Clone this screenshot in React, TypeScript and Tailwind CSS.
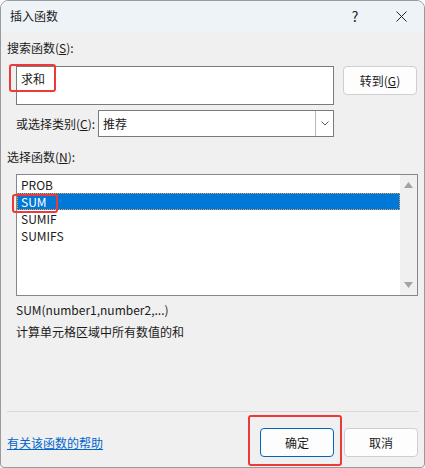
const font = { fontFamily: '"Segoe UI", "Noto Sans CJK SC", "Noto Sans", sans-serif' };

const Mark = ({ className }: { className: string }) => (
  <div className={`absolute border-2 border-[#ec3a3a] rounded-[3px] pointer-events-none ${className}`} />
);

const App = () => {
  const items = ["PROB", "SUM", "SUMIF", "SUMIFS"];
  return (
    <div
      className="w-[425px] h-[468px] bg-[#f0f0f0] border border-[#9a9a9a] rounded-t-[8px] rounded-b-[4px] overflow-hidden text-[12px] leading-[16px] text-[#1a1a1a] flex flex-col"
      style={font}
    >
      {/* title bar */}
      <div className="h-[30px] shrink-0 bg-[#eef3f8] flex items-center">
        <span className="pl-[9px] flex-1">插入函数</span>
        <div className="w-[46px] h-full flex items-center justify-center text-[14px]">?</div>
        <div className="w-[46px] h-full flex items-center justify-center">
          <svg width="11" height="11" viewBox="0 0 11 11">
            <path d="M0.5 0.5L10.5 10.5M10.5 0.5L0.5 10.5" stroke="#222" strokeWidth="1" />
          </svg>
        </div>
      </div>

      <div className="flex flex-col pl-[6px] pr-[6px]">
        <div className="mt-[9px]">
          搜索函数(<span className="underline">S</span>):
        </div>

        <div className="mt-[10px] flex items-start">
          <div className="relative ml-[9px] w-[318px] h-[39px] bg-white border border-[#7a7a7a]">
            <span className="absolute left-[4px] top-[4px]">求和</span>
            <Mark className="left-[-8px] top-[-3px] w-[47px] h-[28px]" />
          </div>
          <button className="ml-[9px] w-[74px] h-[29px] bg-[#fdfdfd] border border-[#cfcfcf] rounded-[4px]">
            转到(<span className="underline">G</span>)
          </button>
        </div>

        <div className="mt-[5px] flex items-center">
          <span className="ml-[9px] w-[82px]">
            或选择类别(<span className="underline">C</span>):
          </span>
          <div className="w-[236px] h-[27px] bg-white border border-[#7a7a7a] flex items-center">
            <span className="pl-[4px] flex-1">推荐</span>
            <div className="w-[18px] h-full border-l border-[#b8b8b8] flex items-center justify-center">
              <svg width="8" height="5" viewBox="0 0 8 5">
                <path d="M0.5 0.5L4 4L7.5 0.5" stroke="#555" strokeWidth="1" fill="none" />
              </svg>
            </div>
          </div>
        </div>

        <div className="mt-[12px]">
          选择函数(<span className="underline">N</span>):
        </div>

        <div className="relative mt-[9px] ml-[9px] w-[402px] h-[122px] bg-white border border-[#828790] flex">
          <div className="flex-1 pt-[1px]">
            {items.map((it) => (
              <div
                key={it}
                className={
                  it === "SUM"
                    ? "h-[17px] pl-[3px] flex items-center bg-[#0078d7] text-white border border-dotted border-[#f0a040]"
                    : "h-[17px] pl-[4px] flex items-center"
                }
              >
                {it}
              </div>
            ))}
          </div>
          <div className="w-[17px] bg-[#f0f0f0] flex flex-col items-center justify-between py-[7px]">
            <svg width="9" height="6" viewBox="0 0 9 6">
              <path d="M0 6L4.5 0L9 6Z" fill="#a3a3a3" />
            </svg>
            <svg width="9" height="6" viewBox="0 0 9 6">
              <path d="M0 0L4.5 6L9 0Z" fill="#a3a3a3" />
            </svg>
          </div>
          <Mark className="left-[-5px] top-[19px] w-[46px] h-[19px]" />
        </div>

        <div className="mt-[6px] ml-[9px]">SUM(number1,number2,...)</div>
        <div className="mt-[6px] ml-[9px]">计算单元格区域中所有数值的和</div>

        <div className="mt-[71px] h-px bg-[#d8d8d8]" />

        <div className="mt-[16px] flex items-center">
          <a className="flex-1 text-[#0066cc] underline">有关该函数的帮助</a>
          <div className="relative">
            <button className="w-[74px] h-[29px] bg-[#fdfdfd] border border-[#0067c0] rounded-[4px]">确定</button>
            <Mark className="left-[-12px] top-[-13px] w-[94px] h-[51px]" />
          </div>
          <button className="ml-[10px] w-[74px] h-[29px] bg-[#fdfdfd] border border-[#cfcfcf] rounded-[4px]">取消</button>
        </div>
      </div>
    </div>
  );
};

export default App;
